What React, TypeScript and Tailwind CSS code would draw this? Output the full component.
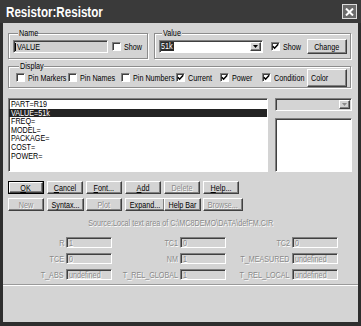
import React from "react";

const SUNKEN =
  "border border-t-[#808080] border-l-[#808080] border-r-white border-b-white shadow-[inset_1px_1px_0_#404040]";
const RAISED =
  "border border-t-white border-l-white border-r-[#404040] border-b-[#404040] shadow-[inset_-1px_-1px_0_#808080]";
const DIS = "text-[#8a8a8a] [text-shadow:1px_1px_0_#fff]";
const GROUP =
  "border border-[#8c8c8c] shadow-[inset_1px_1px_0_#fff,1px_1px_0_#fff]";

/* Text drawn in the screenshot's narrow dialog face */
function T({
  children,
  o = "origin-left",
}: {
  children: React.ReactNode;
  o?: string;
}) {
  return (
    <span className={`inline-block whitespace-nowrap scale-x-[0.8] ${o}`}>
      {children}
    </span>
  );
}

function Check({ checked = false }: { checked?: boolean }) {
  return (
    <span
      className={`w-[9px] h-[9px] shrink-0 bg-white flex items-center justify-center ${SUNKEN}`}
    >
      {checked && (
        <svg width="7" height="7" viewBox="0 0 7 7" className="block">
          <path
            d="M0.8 3.2 L2.6 5.2 L6.2 1.2"
            stroke="#000"
            strokeWidth="1.5"
            fill="none"
          />
        </svg>
      )}
    </span>
  );
}

function CheckItem({
  label,
  checked,
  className = "",
}: {
  label: string;
  checked?: boolean;
  className?: string;
}) {
  return (
    <div className={`flex items-center shrink-0 ${className}`}>
      <Check checked={checked} />
      <span className="ml-[3px] flex">
        <T>{label}</T>
      </span>
    </div>
  );
}

function Btn({
  children,
  disabled,
  def,
  className = "w-[36px] h-[13px]",
  align = "justify-center",
  o = "origin-center",
}: {
  children: React.ReactNode;
  disabled?: boolean;
  def?: boolean;
  className?: string;
  align?: string;
  o?: string;
}) {
  return (
    <div
      className={`flex shrink-0 ${className} ${def ? "border border-black" : ""}`}
    >
      <div
        className={`flex-1 flex items-center ${align} bg-[#d4d4d4] ${RAISED} ${
          disabled ? DIS : ""
        }`}
      >
        <T o={o}>{children}</T>
      </div>
    </div>
  );
}

function Arrow({ color = "#000" }: { color?: string }) {
  return (
    <svg width="5" height="3" viewBox="0 0 5 3" className="block">
      <path d="M0 0 H5 L2.5 3 Z" fill={color} />
    </svg>
  );
}

function Field({ label, value, labelW }: { label: string; value: string; labelW: string }) {
  return (
    <>
      <div className={`${labelW} shrink-0 flex justify-end pr-[2px] ${DIS}`}>
        <T o="origin-right">{label}</T>
      </div>
      <div
        className={`w-[46px] h-[11px] shrink-0 flex items-center pl-[2px] bg-[#d4d4d4] ${SUNKEN} ${DIS}`}
      >
        <T>{value}</T>
      </div>
    </>
  );
}

const ITEMS = ["PART=R19", "VALUE=51k", "FREQ=", "MODEL=", "PACKAGE=", "COST=", "POWER="];

export default function App() {
  return (
    <div className="w-[361px] h-[326px] bg-[#2e2e2e] flex flex-col overflow-hidden font-['Liberation_Sans',Arial,sans-serif] text-[9px] leading-[10px] text-black">
      {/* Title bar */}
      <div className="h-[23px] shrink-0 flex items-center pl-[6px] pr-[4px] bg-[#3a3a3a]">
        <span className="flex-1 flex">
          <span className="inline-block whitespace-nowrap scale-x-[0.83] origin-left text-white font-bold text-[14px] leading-none">
            Resistor:Resistor
          </span>
        </span>
        <div className="w-[15px] h-[15px] border border-[#dcdcdc] bg-[#6b6b6b] flex items-center justify-center">
          <svg width="9" height="8" viewBox="0 0 9 8" className="block">
            <path d="M1 0.5 L8 7.5 M8 0.5 L1 7.5" stroke="#fff" strokeWidth="2" />
          </svg>
        </div>
      </div>

      {/* Body */}
      <div className="flex-1 mx-[3px] mb-[4px] bg-[#d4d4d4] flex flex-col">
        <div className="px-[5px] flex flex-col">
          {/* Row 1: Name + Value */}
          <div className="flex mt-[5px]">
            <fieldset className={`w-[140px] h-[31px] ${GROUP} pl-[4px]`}>
              <legend className="ml-[5px] w-[20px] px-[1px] bg-[#d4d4d4] overflow-visible">
                <T>Name</T>
              </legend>
              <div className="flex items-center h-[15px] mt-[1px]">
                <div
                  className={`w-[95px] h-[13px] flex items-center pl-[1px] bg-[#d0d0d0] ${SUNKEN}`}
                >
                  <span className="w-[1px] h-[8px] bg-black mr-[1px]" />
                  <T>VALUE</T>
                </div>
                <CheckItem label="Show" className="ml-[4px]" />
              </div>
            </fieldset>
            <fieldset className={`w-[197px] h-[31px] ml-[6px] ${GROUP} pl-[4px]`}>
              <legend className="ml-[3px] w-[20px] px-[1px] bg-[#d4d4d4] overflow-visible">
                <T>Value</T>
              </legend>
              <div className="flex items-center h-[15px] mt-[1px]">
                <div
                  className={`w-[104px] h-[13px] flex items-center bg-white pl-[1px] pr-[1px] ${SUNKEN}`}
                >
                  <span className="w-[13px] bg-[#2a2a2a] text-white leading-[9px] flex">
                    <T>51k</T>
                  </span>
                  <span className="flex-1" />
                  <div
                    className={`w-[11px] h-[9px] flex items-center justify-center bg-[#d4d4d4] ${RAISED}`}
                  >
                    <Arrow />
                  </div>
                </div>
                <CheckItem label="Show" checked className="ml-[8px] w-[36px]" />
                <Btn className="w-[40px] h-[15px]">Change</Btn>
              </div>
            </fieldset>
          </div>

          {/* Display */}
          <fieldset className={`w-[343px] mt-[2px] ${GROUP} pl-[7px] pb-[3px]`}>
            <legend className="ml-[3px] w-[25px] px-[1px] bg-[#d4d4d4] overflow-visible">
              <T>Display</T>
            </legend>
            <div className="flex items-center h-[13px]">
              <CheckItem label="Pin Markers" className="w-[52px]" />
              <CheckItem label="Pin Names" className="w-[53px]" />
              <CheckItem label="Pin Numbers" className="w-[55px]" />
              <CheckItem label="Current" checked className="w-[44px]" />
              <CheckItem label="Power" checked className="w-[42px]" />
              <CheckItem label="Condition" checked className="w-[45px]" />
              <Btn className="w-[40px] h-[18px]" align="justify-start pl-[3px]" o="origin-left">
                Color
              </Btn>
            </div>
          </fieldset>

          {/* List row */}
          <div className="flex mt-[10px]">
            <div className={`w-[260px] h-[74px] bg-white flex flex-col pt-[1px] ${SUNKEN}`}>
              {ITEMS.map((it, i) => (
                <div
                  key={it}
                  className={`h-[8.6px] leading-[8.6px] pl-[2px] flex ${
                    i === 1 ? "bg-[#232323] text-white" : ""
                  }`}
                >
                  <T>{it}</T>
                </div>
              ))}
            </div>
            <div className="ml-[7px] w-[77px] flex flex-col">
              <div
                className={`h-[13px] flex items-center justify-end pr-[1px] bg-[#d4d4d4] ${SUNKEN}`}
              >
                <div
                  className={`w-[11px] h-[9px] flex items-center justify-center bg-[#d4d4d4] ${RAISED}`}
                >
                  <Arrow color="#8a8a8a" />
                </div>
              </div>
              <div className={`mt-[7px] h-[54px] bg-white ${SUNKEN}`} />
            </div>
          </div>

          {/* Buttons */}
          <div className="flex gap-[3px] mt-[9px]">
            <Btn def>
              <u>O</u>K
            </Btn>
            <Btn>
              <u>C</u>ancel
            </Btn>
            <Btn>
              <u>F</u>ont...
            </Btn>
            <Btn>
              <u>A</u>dd
            </Btn>
            <Btn disabled>Delete</Btn>
            <Btn>
              <u>H</u>elp...
            </Btn>
          </div>
          <div className="flex gap-[3px] mt-[4px]">
            <Btn disabled>New</Btn>
            <Btn>Syntax...</Btn>
            <Btn disabled>Plot</Btn>
            <Btn>Expand...</Btn>
            <Btn>Help Bar</Btn>
            <Btn disabled>Browse...</Btn>
          </div>
        </div>

        {/* Source text */}
        <div className={`mt-[7px] flex justify-center ${DIS}`}>
          <T o="origin-center">Source:Local text area of C:\MC8DEMO\DATA\defFM.CIR</T>
        </div>

        {/* Fields */}
        <div className="px-[5px] flex flex-col gap-[5px] mt-[9px]">
          <div className="flex items-center">
            <Field label="R" value="1" labelW="w-[58px]" />
            <Field label="TC1" value="0" labelW="w-[68px]" />
            <Field label="TC2" value="0" labelW="w-[66px]" />
          </div>
          <div className="flex items-center">
            <Field label="TCE" value="0" labelW="w-[58px]" />
            <Field label="NM" value="1" labelW="w-[68px]" />
            <Field label="T_MEASURED" value="undefined" labelW="w-[66px]" />
          </div>
          <div className="flex items-center">
            <Field label="T_ABS" value="undefined" labelW="w-[58px]" />
            <Field label="T_REL_GLOBAL" value="1" labelW="w-[68px]" />
            <Field label="T_REL_LOCAL" value="undefined" labelW="w-[66px]" />
          </div>
        </div>

        {/* Separator + status area */}
        <div className="mt-[4px] border-t border-[#9a9a9a]" />
        <div className="flex-1 border-t border-white bg-[#d4d4d4]" />
      </div>
    </div>
  );
}
